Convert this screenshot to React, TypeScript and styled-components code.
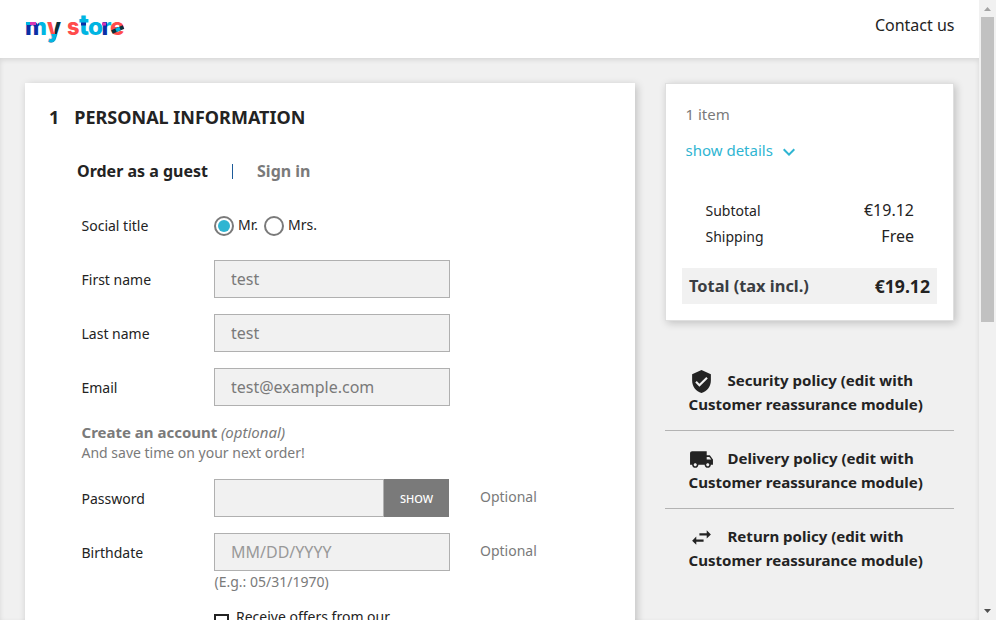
import React from "react";
import styled, { createGlobalStyle } from "styled-components";
import { MdVerifiedUser, MdLocalShipping, MdExpandMore } from "react-icons/md";

const GlobalStyle = createGlobalStyle`
  * { box-sizing: border-box; }
  body {
    margin: 0;
    overflow: hidden;
    font-family: "Noto Sans", sans-serif;
    font-size: 16px;
    color: #232323;
    background: #fff;
  }
  p, h1 { margin: 0; }
`;

const Window = styled.div`
  display: grid;
  grid-template-columns: 979px 17px;
  height: 620px;
  overflow: hidden;
`;

const Page = styled.div`
  display: flex;
  flex-direction: column;
  height: 620px;
  overflow: hidden;
`;

const Header = styled.header`
  display: flex;
  flex: none;
  justify-content: space-between;
  height: 58px;
  padding: 14px 24.500px 0 25px;
  background: #fff;
`;

const LogoSvg = styled.svg`
  display: block;
  width: 100px;
  height: 32px;
  overflow: visible;
  font-family: "Inter", sans-serif;
`;

const ContactLink = styled.a`
  height: 22px;
  line-height: 22px;
  color: #232323;
`;

const Main = styled.main`
  display: grid;
  grid-template-columns: 610px 289px;
  column-gap: 30px;
  align-items: start;
  flex: 1;
  min-height: 0;
  padding: 25px 25px 0;
  background: #f0f0f0;
  box-shadow: inset 0 2px 5px 0 rgba(0, 0, 0, 0.11);
`;

const Checkout = styled.section`
  height: 700px;
  background: #fff;
  box-shadow: 2px 2px 8px 0 rgba(0, 0, 0, 0.2);
`;

const StepTitle = styled.h1`
  display: flex;
  gap: 15px;
  padding: 22px 0 0 24px;
  height: 74px;
  line-height: 25px;
  font-size: 18px;
  font-weight: 700;
`;

const Tabs = styled.nav`
  display: flex;
  align-items: center;
  height: 28px;
  padding-left: 52px;
  font-size: 16px;
  font-weight: 700;
`;

const Tab = styled.a<{ $active?: boolean }>`
  color: ${(p) => (p.$active ? "#232323" : "#7a7a7a")};
`;

const Divider = styled.span`
  width: 1px;
  height: 15px;
  margin: 0 24px;
  background: #1d5b99;
`;

const Form = styled.form`
  display: flex;
  flex-direction: column;
  padding: 21px 0 0 57px;
  font-size: 14px;
`;

const Row = styled.div`
  display: grid;
  grid-template-columns: 132px 236px 1fr;
  height: 54px;
  align-items: start;
`;

const Label = styled.label`
  line-height: 38px;
  padding-top: 1px;
  margin-left: -0.500px;
`;

const Field = styled.input`
  width: 100%;
  height: 38px;
  padding: 0 16px;
  border: 1px solid #b0b0b0;
  border-radius: 0;
  outline: 0;
  background: #f1f1f1;
  color: #7a7a7a;
  font: 16px "Noto Sans", sans-serif;
  &::placeholder { color: #999; opacity: 1; }
`;

const Password = styled.div`
  display: grid;
  grid-template-columns: 170px 65px;
`;

const ShowButton = styled.button`
  height: 38px;
  padding: 1px 0 0;
  border: 0;
  background: #7a7a7a;
  color: #fff;
  font: 500 11px "Noto Sans", sans-serif;
`;

const Comment = styled.span`
  padding-left: 30px;
  line-height: 36px;
  color: #7a7a7a;
`;

const Hint = styled.span`
  display: block;
  height: 22px;
  padding-left: 0.500px;
  line-height: 22px;
  color: #7a7a7a;
`;

const Radios = styled.div`
  display: flex;
  align-items: center;
  height: 38px;
`;

const Radio = styled.span<{ $checked?: boolean }>`
  width: 20px;
  height: 20px;
  margin: 1px 4px 0 0;
  padding: 2px;
  border: 2px solid #7a7a7a;
  border-radius: 50%;
  background: ${(p) => (p.$checked ? "#2fb5d2" : "#fff")};
  background-clip: content-box;
`;

const RadioText = styled.span`
  margin-right: 6px;
  line-height: 20px;
`;

const Account = styled.div`
  height: 57px;
  margin-left: -0.500px;
  line-height: 20px;
  color: #7a7a7a;
`;

const AccountTitle = styled.span`
  font-size: 15px;
  font-weight: 700;
`;

const AccountNote = styled.em`
  font-size: 15px;
`;

const Offers = styled.div`
  display: flex;
  gap: 7px;
  height: 30px;
  margin: 20px 0 0 132px;
  line-height: 20px;
`;

const Checkbox = styled.span`
  width: 15px;
  height: 15px;
  margin-top: 7px;
  border: 2px solid #232323;
`;

const Side = styled.aside`
  display: flex;
  flex-direction: column;
`;

const Summary = styled.section`
  height: 238px;
  padding: 19px 16px 0;
  border: 1px solid #dfdfdf;
  background: #fff;
  box-shadow: 2px 2px 8px 0 rgba(0, 0, 0, 0.2);
`;

const ItemCount = styled.p`
  padding-left: 3.500px;
  line-height: 22px;
  font-size: 15px;
  color: #7a7a7a;
`;

const Details = styled.a`
  display: flex;
  align-items: center;
  gap: 4px;
  height: 22px;
  margin-top: 14px;
  padding-left: 3.500px;
  font-size: 15px;
  color: #2fb5d2;
  svg { margin-top: 3px; }
`;

const Totals = styled.div`
  padding: 36px 23px 0 23.500px;
`;

const TotalLine = styled.div`
  display: flex;
  justify-content: space-between;
  height: 26px;
  line-height: 26px;
`;

const LineLabel = styled.span`
  padding-top: 1px;
  font-size: 14px;
`;

const Grand = styled.div`
  display: flex;
  justify-content: space-between;
  height: 36px;
  margin-top: 19px;
  padding: 0 7px;
  line-height: 36px;
  background: #f1f1f1;
  font-weight: 700;
`;

const GrandLabel = styled.span`
  font-size: 16.400px;
  color: #3a3d42;
`;

const GrandValue = styled.span`
  font-size: 17.600px;
`;

const Policies = styled.div`
  margin-top: 32px;
`;

const Policy = styled.div`
  height: 78px;
  padding: 15px 23px 0 23.500px;
  border-bottom: 1px solid #b3b3b3;
  line-height: 24px;
  font-size: 15.060px;
  font-weight: 700;
  white-space: nowrap;
  &:last-child { border-bottom: 0; }
`;

const PolicyTop = styled.div`
  display: flex;
  align-items: center;
  gap: 14px;
  height: 24px;
  svg { flex: none; width: 25px; height: 25px; margin-top: 2px; }
`;

const Scrollbar = styled.div`
  display: flex;
  flex-direction: column;
  align-items: center;
  height: 620px;
  background: #f1f1f1;
`;

const ScrollThumb = styled.div`
  width: 13px;
  height: 305px;
  margin-bottom: auto;
  background: #c1c1c1;
`;

const ScrollArrow = styled.svg`
  display: block;
  width: 17px;
  height: 17px;
`;

function Logo() {
  return (
    <LogoSvg viewBox="0 0 100 32" role="img" aria-label="my store">
      <defs>
        <linearGradient id="m" gradientUnits="userSpaceOnUse" x1="0" x2="20" y1="0" y2="0">
          <stop offset=".72" stopColor="#0a2fa5" />
          <stop offset=".72" stopColor="#00b5e2" />
        </linearGradient>
        <linearGradient id="y" gradientUnits="userSpaceOnUse" x1="22" x2="36" y1="0" y2="0">
          <stop offset=".6" stopColor="#ff4c4c" />
          <stop offset=".6" stopColor="#0a303b" />
        </linearGradient>
        <linearGradient id="r" gradientUnits="userSpaceOnUse" x1="77" x2="86" y1="0" y2="0">
          <stop offset=".52" stopColor="#0a2fa5" />
          <stop offset=".52" stopColor="#00b5e2" />
        </linearGradient>
        <linearGradient id="tail" gradientUnits="userSpaceOnUse" x1="0" x2="0" y1="0" y2="30">
          <stop offset=".67" stopColor="#00b5e2" stopOpacity="0" />
          <stop offset=".67" stopColor="#00b5e2" />
        </linearGradient>
      </defs>
      <g fontSize="22.500" fontWeight="800">
        <text x="0" y="20.500" fill="url(#m)" textLength="22" lengthAdjust="spacingAndGlyphs">m</text>
        <g fontSize="27">
          <text x="22" y="22.500" fill="url(#y)" textLength="14" lengthAdjust="spacingAndGlyphs">y</text>
          <text x="22" y="22.500" fill="url(#tail)" textLength="14" lengthAdjust="spacingAndGlyphs" aria-hidden="true">y</text>
        </g>
        <text x="42" y="20.800" fill="#ff4c4c" textLength="12.500" lengthAdjust="spacingAndGlyphs">s</text>
        <text x="54" y="20.800" fill="#00b5e2" fontSize="28" textLength="10" lengthAdjust="spacingAndGlyphs">t</text>
        <text x="63" y="20.800" fill="#00b5e2" textLength="15" lengthAdjust="spacingAndGlyphs">o</text>
        <text x="76.500" y="20.800" fill="url(#r)" textLength="10" lengthAdjust="spacingAndGlyphs">r</text>
        <text x="85" y="20.800" fill="#ff4c4c" textLength="14.500" lengthAdjust="spacingAndGlyphs">e</text>
      </g>
      <rect x="1" y="8" width="4" height="3" fill="#00b5e2" />
      <rect x="5" y="8" width="6" height="3" fill="#d738b4" />
      <rect x="56" y="8.500" width="5" height="3" fill="#0a2fa5" />
      <rect x="77" y="8.500" width="4" height="3" fill="#d738b4" />
      <path d="M87 18 98.500 13" stroke="#0a303b" strokeWidth="3.800" />
      <path d="M91 16.300 95 14.500" stroke="#00b5e2" strokeWidth="3.800" />
    </LogoSvg>
  );
}

function SwapIcon() {
  return (
    <svg viewBox="0 0 24 24" fill="currentColor">
      <path d="M6.990 11 3 15l3.990 4v-3H14v-2H6.990v-3zM21 9l-3.990-4v3H10v2h7.010v3L21 9z" />
    </svg>
  );
}

const policies = [
  { name: "Security", icon: <MdVerifiedUser /> },
  { name: "Delivery", icon: <MdLocalShipping /> },
  { name: "Return", icon: <SwapIcon /> },
];

const contactFields = [
  { label: "First name", value: "test" },
  { label: "Last name", value: "test" },
  { label: "Email", value: "test@example.com" },
];

export default function App() {
  return (
    <>
      <GlobalStyle />
      <Window>
        <Page>
          <Header>
            <Logo />
            <ContactLink>Contact us</ContactLink>
          </Header>
          <Main>
            <Checkout>
              <StepTitle>
                <span>1</span>
                <span>PERSONAL INFORMATION</span>
              </StepTitle>
              <Tabs>
                <Tab $active>Order as a guest</Tab>
                <Divider />
                <Tab>Sign in</Tab>
              </Tabs>
              <Form>
                <Row>
                  <Label>Social title</Label>
                  <Radios>
                    <Radio $checked />
                    <RadioText>Mr.</RadioText>
                    <Radio />
                    <RadioText>Mrs.</RadioText>
                  </Radios>
                </Row>
                {contactFields.map((f) => (
                  <Row key={f.label}>
                    <Label>{f.label}</Label>
                    <Field defaultValue={f.value} />
                  </Row>
                ))}
                <Account>
                  <AccountTitle>Create an account</AccountTitle>{" "}
                  <AccountNote>(optional)</AccountNote>
                  <br />
                  And save time on your next order!
                </Account>
                <Row>
                  <Label>Password</Label>
                  <Password>
                    <Field type="password" />
                    <ShowButton type="button">SHOW</ShowButton>
                  </Password>
                  <Comment>Optional</Comment>
                </Row>
                <Row>
                  <Label>Birthdate</Label>
                  <div>
                    <Field placeholder="MM/DD/YYYY" />
                    <Hint>(E.g.: 05/31/1970)</Hint>
                  </div>
                  <Comment>Optional</Comment>
                </Row>
                <Offers>
                  <Checkbox />
                  <span>Receive offers from our</span>
                </Offers>
              </Form>
            </Checkout>
            <Side>
              <Summary>
                <ItemCount>1 item</ItemCount>
                <Details>
                  show details <MdExpandMore size={24} />
                </Details>
                <Totals>
                  <TotalLine>
                    <LineLabel>Subtotal</LineLabel>
                    <span>€19.12</span>
                  </TotalLine>
                  <TotalLine>
                    <LineLabel>Shipping</LineLabel>
                    <span>Free</span>
                  </TotalLine>
                </Totals>
                <Grand>
                  <GrandLabel>Total (tax incl.)</GrandLabel>
                  <GrandValue>€19.12</GrandValue>
                </Grand>
              </Summary>
              <Policies>
                {policies.map((p) => (
                  <Policy key={p.name}>
                    <PolicyTop>
                      {p.icon}
                      <span>{p.name} policy (edit with</span>
                    </PolicyTop>
                    Customer reassurance module)
                  </Policy>
                ))}
              </Policies>
            </Side>
          </Main>
        </Page>
        <Scrollbar>
          <ScrollArrow viewBox="0 0 17 17">
            <path d="M5 11h7L8.500 7z" fill="#a3a3a3" />
          </ScrollArrow>
          <ScrollThumb />
          <ScrollArrow viewBox="0 0 17 17">
            <path d="M5 6h7L8.500 10z" fill="#505050" />
          </ScrollArrow>
        </Scrollbar>
      </Window>
    </>
  );
}
